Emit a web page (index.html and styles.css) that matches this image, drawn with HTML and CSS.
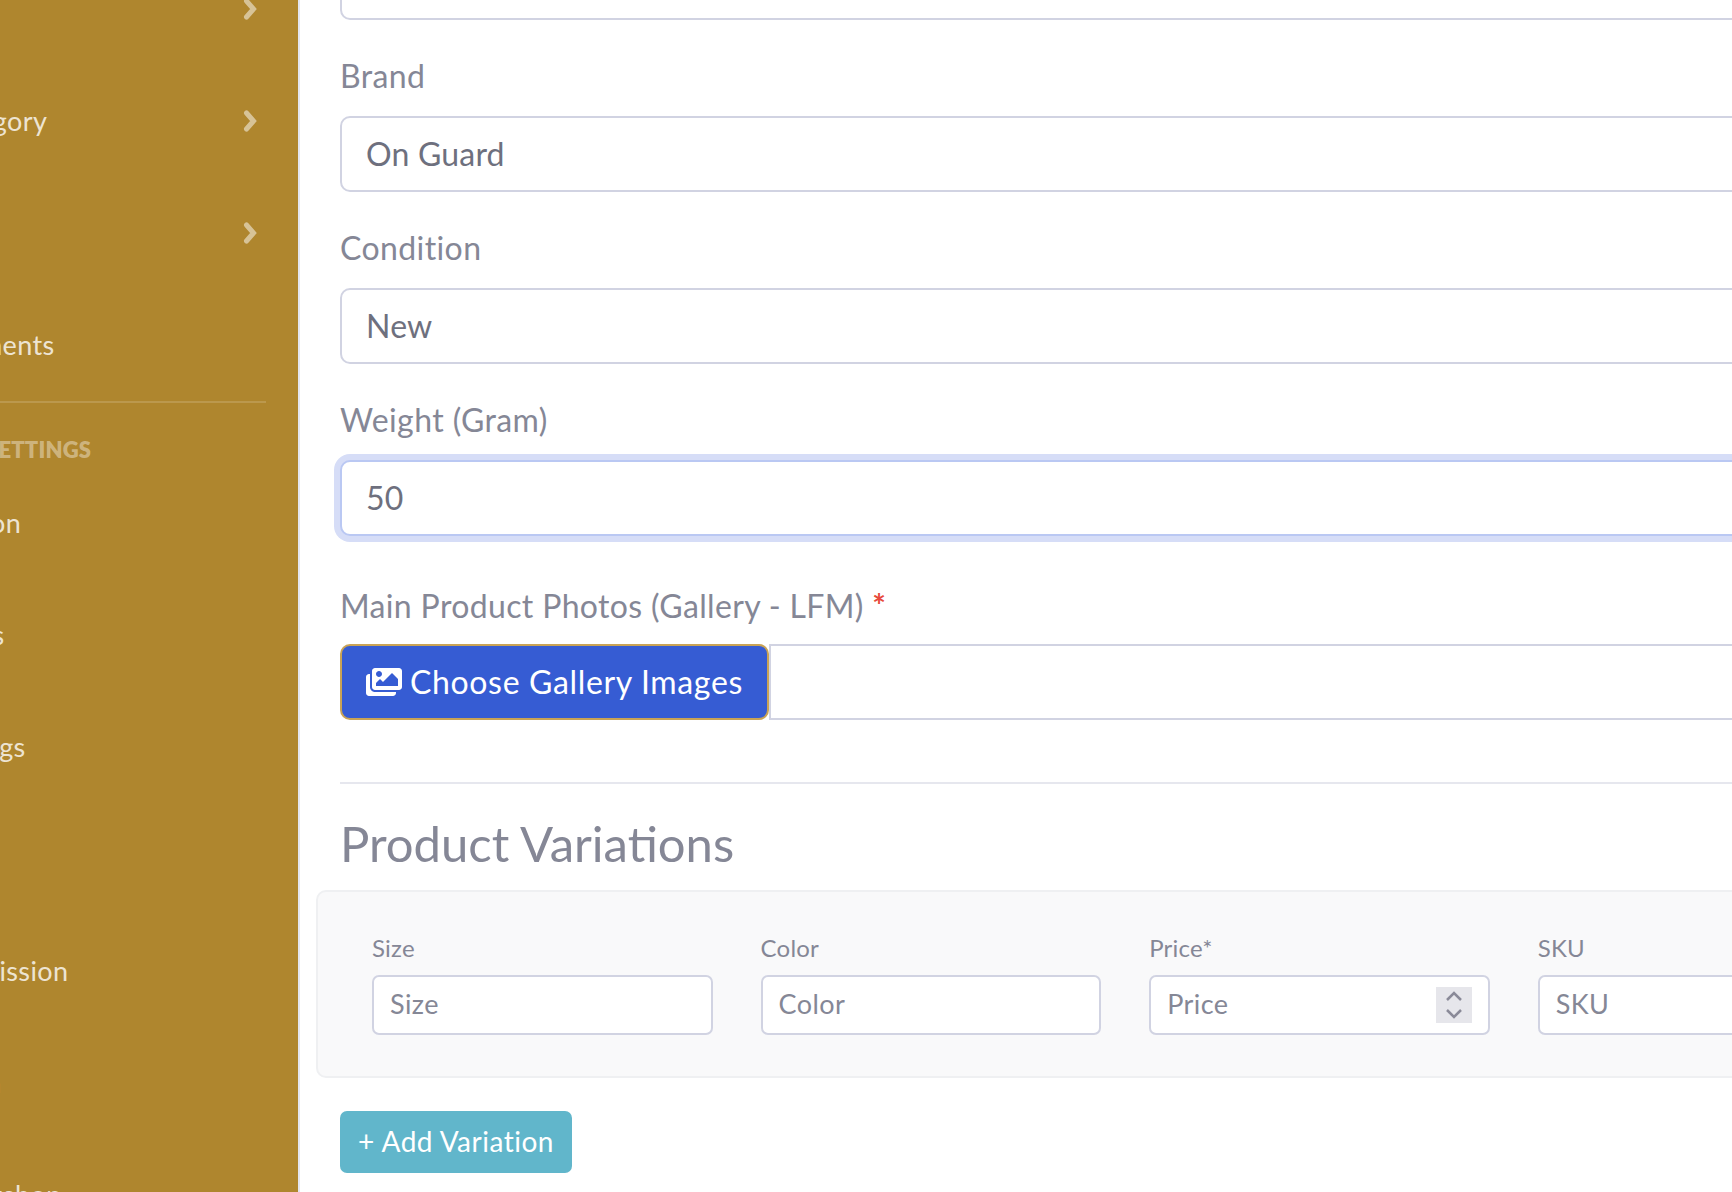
FILE: index.html
```html
<!DOCTYPE html>
<html lang="en">
<head>
<meta charset="utf-8">
<title>Edit Product</title>
<link rel="stylesheet" href="styles.css">
</head>
<body>
<div class="shell">
  <aside class="sidebar">
    <nav class="nav">
      <a class="nav-row"><span>Blog</span><svg class="chev" viewBox="0 0 14 22"><path d="M3.500 3l7 8-7 8"/></svg></a>
      <a class="nav-row"><span>Category</span><svg class="chev" viewBox="0 0 14 22"><path d="M3.500 3l7 8-7 8"/></svg></a>
      <a class="nav-row"><span>Tags</span><svg class="chev" viewBox="0 0 14 22"><path d="M3.500 3l7 8-7 8"/></svg></a>
      <a class="nav-row"><span>Payments</span></a>
      <hr class="nav-rule">
      <div class="nav-head">SETTINGS</div>
      <a class="nav-row"><span>Option</span></a>
      <a class="nav-row"><span>Users</span></a>
      <a class="nav-row"><span>Ratings</span></a>
      <a class="nav-row"><span>Role</span></a>
      <a class="nav-row"><span>Permission</span></a>
      <a class="nav-row"><span>Login</span></a>
      <a class="nav-row nav-last"><span>Workshop</span></a>
    </nav>
  </aside>
  <main class="main">
    <div class="field">
      <input class="control" type="text">
    </div>
    <div class="field">
      <label class="label">Brand</label>
      <input class="control" type="text" value="On Guard">
    </div>
    <div class="field">
      <label class="label">Condition</label>
      <input class="control" type="text" value="New">
    </div>
    <div class="field field-weight">
      <label class="label">Weight (Gram)</label>
      <input class="control control-focus" type="text" value="50">
    </div>
    <div class="field-file">
      <label class="label label-file">Main Product Photos (Gallery - LFM) <span class="req">*</span></label>
      <div class="file-group">
        <button class="btn-file" type="button">
          <svg class="icon-images" viewBox="0 0 576 512"><path d="M480 416v16c0 26.510-21.490 48-48 48H48c-26.510 0-48-21.490-48-48V176c0-26.510 21.490-48 48-48h16v208c0 44.112 35.888 80 80 80h336zm96-80V80c0-26.510-21.490-48-48-48H144c-26.510 0-48 21.490-48 48v256c0 26.510 21.490 48 48 48h384c26.510 0 48-21.490 48-48zM256 128c0 26.510-21.490 48-48 48s-48-21.490-48-48 21.490-48 48-48 48 21.490 48 48zm-96 144l55.515-55.515c4.686-4.686 12.284-4.686 16.971 0L272 256l135.515-135.515c4.686-4.686 12.284-4.686 16.971 0L512 208v112H160v-48z"/></svg>
          <span class="btn-text">Choose Gallery Images</span>
        </button>
        <div class="file-path"></div>
      </div>
    </div>
    <hr class="rule">
    <h3 class="title">Product Variations</h3>
    <section class="panel">
      <div class="var-col"><label class="var-label">Size</label><input class="var-input" placeholder="Size"></div>
      <div class="var-col"><label class="var-label">Color</label><input class="var-input" placeholder="Color"></div>
      <div class="var-col"><label class="var-label">Price*</label>
        <div class="var-input var-number"><input class="var-inner" placeholder="Price">
          <span class="spin"><svg viewBox="0 0 36 36"><path d="M11 13l7-7 7 7M11 23l7 7 7-7"/></svg></span>
        </div>
      </div>
      <div class="var-col"><label class="var-label">SKU</label><input class="var-input" placeholder="SKU"></div>
    </section>
    <button class="btn-add" type="button">+ Add Variation</button>
  </main>
</div>
</body>
</html>
```
FILE: styles.css
```css
* { box-sizing: border-box; }
html, body { margin: 0; height: 1192px; overflow: hidden; background: #fff; }
body { font-family: "Lato", "Noto Sans", sans-serif; color: #858796; }

.shell { display: flex; width: 2800px; align-items: flex-start; }

.sidebar {
  width: 300px; height: 1192px; flex: none; overflow: hidden;
  background: #af862e; border-right: 2px solid #e3e6f0;
}
.nav { margin: -47px 0 0 -64px; width: 321px; }
.nav-row {
  display: flex; justify-content: space-between; align-items: center;
  height: 112px; font-size: 27px; letter-spacing: .4px; color: rgba(255,255,255,.8);
}
.nav-row span { padding-bottom: 2px; }
.chev { width: 14px; height: 22px; fill: none; stroke: rgba(255,255,255,.5); stroke-width: 5; stroke-linecap: round; }
.nav-rule { margin: 0; height: 2px; border: 0; background: rgba(255,255,255,.15); width: 330px; }
.nav-head {
  height: 64px; display: flex; align-items: center; padding: 28px 0 0 50px;
  font-size: 22px; font-weight: 800; letter-spacing: .2px; color: rgba(255,255,255,.4);
}

.main { flex: 1; padding: 0 40px; margin-top: -56px; }
.field { margin-bottom: 32px; }
.field-weight { margin-bottom: 44px; }
.label { display: block; height: 48px; margin-bottom: 16px; font-size: 32px; line-height: 48px; letter-spacing: .4px; }
.label-file { line-height: 51px; letter-spacing: .35px; }
.req { color: #e74a3b; font-weight: 700; }
.control {
  display: block; width: 100%; height: 76px; padding: 0 24px 2px;
  border: 2px solid #d1d3e2; border-radius: 10px; background: #fff;
  font: 32px "Lato", "Noto Sans", sans-serif; letter-spacing: .2px; color: #6e707e; outline: 0;
}
.control-focus { border-color: #bac8f3; box-shadow: 0 0 0 6px #d6ddf7; }

.file-group { display: flex; height: 76px; }
.btn-file {
  display: flex; align-items: center; gap: 8px; flex: none; width: 429px; height: 76px;
  padding: 0 24px; background: #365cd3; border: 2px solid #c9a355; border-radius: 10px;
  font: 32px "Lato", "Noto Sans", sans-serif; letter-spacing: .65px; color: #fff;
}
.btn-text { padding-bottom: 2px; }
.icon-images { width: 36px; height: 32px; flex: none; fill: #fff; }
.file-path { flex: 1; border: 2px solid #d1d3e2; border-right: 0; background: #fff; }

.rule { margin: 62px 0 0; height: 2px; border: 0; background: #e6e7ee; }
.title { margin: 0; height: 106px; font-size: 49px; font-weight: 400; line-height: 119px; color: #858796; }

.panel {
  display: flex; gap: 48px; margin-left: -24px; padding: 32px 32px 32px 54px;
  height: 188px; background: #f9f9fa; border: 2px solid #eff0f2; border-radius: 10px;
}
.var-col { width: 340.600px; flex: none; }
.var-label { display: block; height: 45px; margin-top: 6px; font-size: 24px; line-height: 36px; letter-spacing: .2px; }
.var-input {
  display: block; width: 100%; height: 60px; padding: 0 16px 3px; background: #fff;
  border: 2px solid #d1d3e2; border-radius: 7px; outline: 0;
  font: 27px "Lato", "Noto Sans", sans-serif; letter-spacing: .4px; color: #858796;
}
.var-input::placeholder, .var-inner::placeholder { color: #858796; opacity: 1; }
.var-number { display: flex; align-items: center; padding: 0 16px; }
.var-inner { flex: 1; min-width: 0; border: 0; padding: 0 0 3px; background: transparent; outline: 0; font: inherit; letter-spacing: inherit; color: inherit; }
.spin { width: 36px; height: 36px; flex: none; background: #e6e6eb; }
.spin svg { display: block; width: 36px; height: 36px; fill: none; stroke: #8a8a98; stroke-width: 2.500; }

.btn-add {
  display: block; margin-top: 33px; width: 232px; height: 62px; padding: 0 0 2px;
  background: #61b6cb; border: 0; border-radius: 7px;
  font: 28px "Lato", "Noto Sans", sans-serif; letter-spacing: .5px; color: #fff;
}
```
